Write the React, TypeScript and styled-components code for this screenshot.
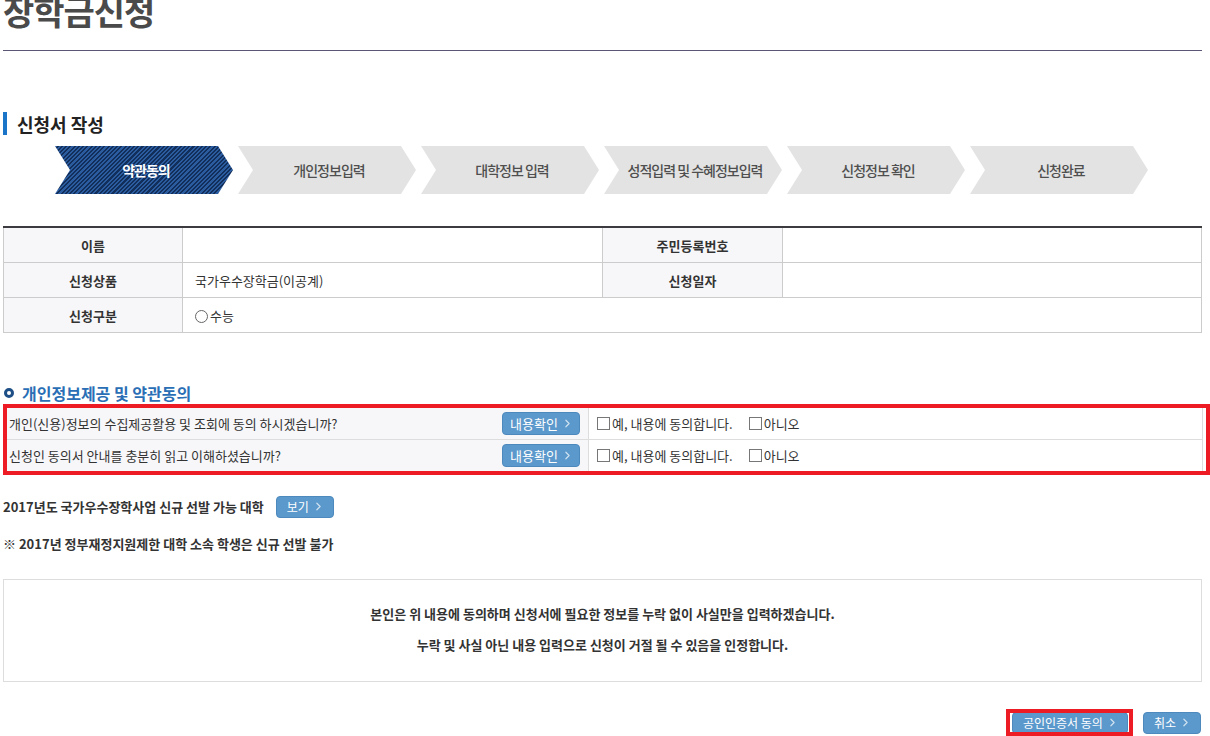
import React from "react";
import styled, { createGlobalStyle } from "styled-components";
import { ChevronRight } from "lucide-react";

const GlobalStyle = createGlobalStyle`
  html, body {
    margin: 0;
    padding: 0;
    background: #fff;
  }
  body {
    font-family: "Noto Sans CJK KR", "Noto Sans", sans-serif;
    font-size: 13px;
    color: #333;
    overflow: hidden;
  }
`;

const Page = styled.div`
  width: 1199px;
  padding-left: 3px;
`;

const TitleBar = styled.div`
  height: 50px;
  border-bottom: 1px solid #5b5675;
  overflow: hidden;
`;

const Title = styled.h1`
  margin: -9px 0 0;
  font-size: 34px;
  line-height: 40px;
  font-weight: 700;
  color: #4a4a4a;
  letter-spacing: -1px;
`;

const SectionTitle = styled.h2`
  display: flex;
  align-items: center;
  gap: 10px;
  height: 23px;
  margin: 61px 0 0;
  font-size: 18px;
  font-weight: 700;
  color: #222;

  &::before {
    content: "";
    width: 4px;
    height: 23px;
    background: #1a74c8;
  }
`;

const Steps = styled.ol`
  display: flex;
  gap: 5px;
  list-style: none;
  margin: 11px 0 0;
  padding: 0 0 0 52px;
`;

const Step = styled.li<{ $active?: boolean }>`
  width: 178px;
  height: 48px;
  display: flex;
  align-items: center;
  justify-content: center;
  padding-left: 4px;
  box-sizing: border-box;
  clip-path: polygon(0 0, 163px 0, 178px 50%, 163px 100%, 0 100%, 15px 50%);
  background: ${(p) =>
    p.$active
      ? "repeating-linear-gradient(135deg, #2b5c9f 0 1.5px, #122f5c 1.5px 3px)"
      : "#e3e3e3"};
  color: ${(p) => (p.$active ? "#fff" : "#4f4f4f")};
  font-size: 14px;
  font-weight: ${(p) => (p.$active ? 700 : 500)};
  letter-spacing: -1px;
`;

const InfoTable = styled.table`
  width: 1199px;
  margin-top: 32px;
  border-collapse: collapse;
  border-top: 2px solid #3b3b40;
  border-left: 1px solid #ccc;
  border-right: 1px solid #ccc;
  table-layout: fixed;
`;

const Th = styled.th`
  height: 34px;
  padding: 0;
  background: #f7f7f9;
  border: 1px solid #ccc;
  border-top: none;
  font-size: 13px;
  font-weight: 700;
  color: #333;
  text-align: center;
`;

const Td = styled.td`
  height: 34px;
  padding: 0 0 0 12px;
  border-bottom: 1px solid #ccc;
  font-size: 13px;
  color: #333;
`;

const Radio = styled.span`
  display: inline-block;
  width: 11px;
  height: 11px;
  border: 1px solid #666;
  border-radius: 50%;
  vertical-align: -2px;
  margin-right: 2px;
`;

const SubTitle = styled.h3`
  display: flex;
  align-items: center;
  gap: 8px;
  height: 20px;
  margin: 50px 0 0;
  font-size: 16px;
  font-weight: 700;
  color: #2a6fb5;

  &::before {
    content: "";
    box-sizing: border-box;
    width: 10px;
    height: 10px;
    margin-left: 1px;
    border: 3px solid #1d4f86;
    border-radius: 50%;
  }
`;

const RedFrame = styled.div`
  border: 4px solid #ed1c24;
`;

const AgreeBox = styled(RedFrame)`
  margin: 1px -8px 0 0;
  padding-right: 3px;
`;

const AgreeList = styled.div`
  border-right: 1px solid #ddd;
`;

const AgreeRow = styled.div`
  display: grid;
  grid-template-columns: 582px 1fr;
  height: 31px;

  & + & {
    border-top: 1px solid #ddd;
  }
`;

const Question = styled.div`
  display: flex;
  align-items: center;
  justify-content: space-between;
  padding: 0 8px 0 2px;
  background: #f7f7f9;
  border-right: 1px solid #ddd;
  font-size: 13px;
  color: #333;
`;

const Answers = styled.div`
  display: flex;
  align-items: center;
  gap: 16px;
  padding-left: 8px;
`;

const Check = styled.label`
  display: flex;
  align-items: center;
  gap: 2px;
  font-size: 13px;
  color: #333;

  &::before {
    content: "";
    width: 11px;
    height: 11px;
    border: 1px solid #777;
    background: #fff;
  }
`;

const BlueButton = styled.button`
  display: inline-flex;
  align-items: center;
  justify-content: center;
  gap: 3px;
  height: 22px;
  padding: 0 8px 0 10px;
  background: #5b98cb;
  border: 1px solid #4d89bd;
  border-radius: 4px;
  color: #fff;
  font-family: inherit;
  font-size: 12px;
  line-height: 1;
  white-space: nowrap;
  cursor: pointer;

  svg {
    color: #cfe1f0;
    flex: none;
  }
`;

const ConfirmButton = styled(BlueButton)`
  height: 23px;
  width: 78px;
  padding: 0 4px 0 6px;
  font-size: 13px;
`;

const InfoLine = styled.div`
  display: flex;
  align-items: center;
  gap: 12px;
  margin-top: 21px;
  height: 21px;
  font-size: 13px;
  font-weight: 700;
  color: #333;
`;

const Notice = styled.p`
  margin: 17px 0 0;
  font-size: 13px;
  font-weight: 700;
  color: #333;
`;

const PledgeBox = styled.div`
  display: flex;
  flex-direction: column;
  align-items: center;
  justify-content: center;
  gap: 12px;
  height: 103px;
  padding-bottom: 4px;
  box-sizing: border-box;
  margin-top: 26px;
  border: 1px solid #ddd;
  font-size: 13px;
  font-weight: 700;
  color: #333;
`;

const Actions = styled.div`
  display: flex;
  justify-content: flex-end;
  align-items: center;
  gap: 10px;
  margin-top: 27px;
  padding-right: 1px;
`;

const ActionFrame = styled(RedFrame)`
  display: flex;
  align-items: center;
  height: 19px;
  padding: 0 1px 0 2px;
  overflow: hidden;
`;

const steps = [
  "약관동의",
  "개인정보입력",
  "대학정보 입력",
  "성적입력 및 수혜정보입력",
  "신청정보 확인",
  "신청완료",
];

const questions = [
  "개인(신용)정보의 수집제공활용 및 조회에 동의 하시겠습니까?",
  "신청인 동의서 안내를 충분히 읽고 이해하셨습니까?",
];

const Arrow = () => <ChevronRight size={13} strokeWidth={2.2} />;

export default function App() {
  return (
    <Page>
      <GlobalStyle />
      <TitleBar>
        <Title>장학금신청</Title>
      </TitleBar>

      <SectionTitle>신청서 작성</SectionTitle>
      <Steps>
        {steps.map((s, i) => (
          <Step key={s} $active={i === 0}>
            {s}
          </Step>
        ))}
      </Steps>

      <InfoTable>
        <colgroup>
          <col style={{ width: 179 }} />
          <col style={{ width: 420 }} />
          <col style={{ width: 180 }} />
          <col />
        </colgroup>
        <tbody>
          <tr>
            <Th>이름</Th>
            <Td></Td>
            <Th>주민등록번호</Th>
            <Td></Td>
          </tr>
          <tr>
            <Th>신청상품</Th>
            <Td>국가우수장학금(이공계)</Td>
            <Th>신청일자</Th>
            <Td></Td>
          </tr>
          <tr>
            <Th>신청구분</Th>
            <Td colSpan={3}>
              <Radio />
              수능
            </Td>
          </tr>
        </tbody>
      </InfoTable>

      <SubTitle>개인정보제공 및 약관동의</SubTitle>
      <AgreeBox>
        <AgreeList>
          {questions.map((q) => (
            <AgreeRow key={q}>
              <Question>
                {q}
                <ConfirmButton>
                  내용확인 <Arrow />
                </ConfirmButton>
              </Question>
              <Answers>
                <Check>예, 내용에 동의합니다.</Check>
                <Check>아니오</Check>
              </Answers>
            </AgreeRow>
          ))}
        </AgreeList>
      </AgreeBox>

      <InfoLine>
        2017년도 국가우수장학사업 신규 선발 가능 대학
        <BlueButton>
          보기 <Arrow />
        </BlueButton>
      </InfoLine>
      <Notice>※ 2017년 정부재정지원제한 대학 소속 학생은 신규 선발 불가</Notice>

      <PledgeBox>
        <span>본인은 위 내용에 동의하며 신청서에 필요한 정보를 누락 없이 사실만을 입력하겠습니다.</span>
        <span>누락 및 사실 아닌 내용 입력으로 신청이 거절 될 수 있음을 인정합니다.</span>
      </PledgeBox>

      <Actions>
        <ActionFrame>
          <BlueButton>
            공인인증서 동의 <Arrow />
          </BlueButton>
        </ActionFrame>
        <BlueButton>
          취소 <Arrow />
        </BlueButton>
      </Actions>
    </Page>
  );
}
